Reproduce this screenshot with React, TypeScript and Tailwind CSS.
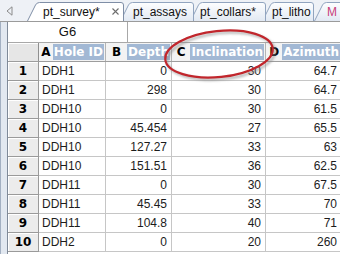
import React from "react";

const rows: string[][] = [
  ["DDH1", "0", "30", "64.7"],
  ["DDH1", "298", "30", "64.7"],
  ["DDH10", "0", "30", "61.5"],
  ["DDH10", "45.454", "27", "65.5"],
  ["DDH10", "127.27", "33", "63"],
  ["DDH10", "151.51", "36", "62.5"],
  ["DDH11", "0", "30", "67.5"],
  ["DDH11", "45.45", "33", "70"],
  ["DDH11", "104.8", "40", "71"],
  ["DDH2", "0", "20", "260"],
];

function TabShape({ w, id, active }: { w: number; id: string; active?: boolean }) {
  const d = `M0.5 19 L8.5 3 Q9.8 0.5 12.5 0.5 L${w - 3} 0.5 Q${w - 0.5} 0.5 ${w - 0.5} 3 L${w - 0.5} 19`;
  return (
    <svg className="absolute left-0 top-0" width={w} height={19} viewBox={`0 0 ${w} 19`}>
      <defs>
        <linearGradient id={id} x1="0" y1="0" x2="0" y2="1">
          <stop offset="0" stopColor={active ? "#ffffff" : "#fdfeff"} />
          <stop offset="1" stopColor={active ? "#ffffff" : "#e2e9f3"} />
        </linearGradient>
      </defs>
      <path d={d} fill={`url(#${id})`} stroke={active ? "#7f8ea6" : "#91a4bf"} strokeWidth="1" />
    </svg>
  );
}

function Tab({
  w,
  label,
  id,
  pl,
  active,
  className,
  textClass,
}: {
  w: number;
  label: string;
  id: string;
  pl: string;
  active?: boolean;
  className?: string;
  textClass?: string;
}) {
  return (
    <div className={`relative h-[19px] shrink-0 ${className ?? ""}`} style={{ width: w }}>
      <TabShape w={w} id={id} active={active} />
      <div className={`relative flex h-full items-center ${pl} text-[12px] leading-none ${textClass ?? "text-[#111]"}`}>
        {label}
        {active && (
          <svg className="ml-[12px]" width="7" height="7" viewBox="0 0 7 7">
            <path d="M0.5 0.5 L6.5 6.5 M6.5 0.5 L0.5 6.5" stroke="#6d6d6d" strokeWidth="1.1" />
          </svg>
        )}
      </div>
    </div>
  );
}

function HeaderCell({ w, letter, label }: { w: number; letter: string; label: string }) {
  return (
    <div
      className="flex h-full shrink-0 items-center border-r border-[#b4b4b4] bg-[#f3f3f3]"
      style={{ width: w }}
    >
      <span className="flex-1 text-center font-['DejaVu_Sans'] text-[12px] font-bold leading-none text-black">
        {letter}
      </span>
      <span className="mr-[1px] flex h-[16px] items-center bg-[#a2b8d4] px-[1px] font-['DejaVu_Sans'] text-[12px] font-bold leading-none text-white">
        {label}
      </span>
    </div>
  );
}

export default function App() {
  const widths = [67, 66, 94, 76];
  return (
    <div className="relative h-[254px] w-[340px] overflow-hidden bg-white font-['Liberation_Sans',Arial,sans-serif]">
      {/* tab strip */}
      <div className="flex h-[22px] items-end border-b border-[#9b9b9b] bg-[#eef1f6]">
        <div className="flex h-full w-[27px] shrink-0 items-center pl-[6px]">
          <svg width="7" height="10" viewBox="0 0 7 10">
            <path d="M6 0.8 L1 5 L6 9.2 Z" fill="none" stroke="#8a8a8a" strokeWidth="1" />
          </svg>
        </div>
        <Tab w={97} label="pt_survey*" id="g1" pl="pl-[16px]" active className="z-30" />
        <Tab w={74} label="pt_assays" id="g2" pl="pl-[13px]" className="z-20 -ml-[4px]" />
        <Tab w={76} label="pt_collars*" id="g3" pl="pl-[10px]" className="z-10 -ml-[4px]" />
        <Tab w={52} label="pt_litho" id="g4" pl="pl-[10px]" className="-ml-[4px]" />
        <Tab w={40} label="M" id="g5" pl="pl-[13px]" textClass="text-[#c8407a]" />
      </div>

      <div className="flex">
        {/* left strip */}
        <div className="h-[232px] w-[7px] shrink-0 border-l border-[#a3b0c2] bg-[#e2e8f0]" />
        <div className="flex flex-col border-l border-[#7f8a99]">
          {/* name box row */}
          <div className="flex h-[21px] border-b border-[#a8a8a8]">
            <div className="flex h-full w-[120px] items-center justify-center border-r border-[#a8a8a8] text-[13px] text-[#111]">
              G6
            </div>
            <div className="flex-1" />
          </div>
          {/* header row */}
          <div className="flex h-[19px] border-b border-[#9d9d9d]">
            <div className="h-full w-[31px] shrink-0 border-r border-[#8f8f8f] bg-[#e6e6e6] shadow-[inset_1px_1px_0_#ffffff]" />
            <HeaderCell w={widths[0]} letter="A" label="Hole ID" />
            <HeaderCell w={widths[1]} letter="B" label="Depth" />
            <HeaderCell w={widths[2]} letter="C" label="Inclination" />
            <HeaderCell w={widths[3]} letter="D" label="Azimuth" />
          </div>
          {/* data rows */}
          {rows.map((r, i) => (
            <div key={i} className="flex h-[19px] text-[12px] leading-none text-[#1c1c1c]">
              <div className="flex h-full w-[31px] shrink-0 items-center justify-center border-b border-r border-[#9a9a9a] bg-[#ececec] font-['DejaVu_Sans'] font-bold text-black shadow-[inset_1px_1px_0_#ffffff]">
                {i + 1}
              </div>
              <div
                className="flex h-full shrink-0 items-center border-b border-r border-[#c6c6c6] pl-[3px]"
                style={{ width: widths[0] }}
              >
                {r[0]}
              </div>
              {[1, 2, 3].map((c) => (
                <div
                  key={c}
                  className="flex h-full shrink-0 items-center justify-end border-b border-r border-[#c6c6c6] pr-[4px]"
                  style={{ width: widths[c] }}
                >
                  {r[c]}
                </div>
              ))}
            </div>
          ))}
        </div>
      </div>

      {/* hand-drawn annotation */}
      <svg className="pointer-events-none absolute left-0 top-0" width="340" height="254" viewBox="0 0 340 254">
        <defs>
          <filter id="blur" x="-20%" y="-20%" width="140%" height="140%">
            <feGaussianBlur stdDeviation="1.2" />
          </filter>
        </defs>
        <ellipse
          cx="221"
          cy="56"
          rx="54"
          ry="23"
          transform="rotate(-6 221 56)"
          fill="none"
          stroke="#8a8a8a"
          strokeOpacity="0.6"
          strokeWidth="2.5"
          filter="url(#blur)"
        />
        <ellipse
          cx="219"
          cy="54"
          rx="54"
          ry="23"
          transform="rotate(-6 219 54)"
          fill="none"
          stroke="#c1262c"
          strokeWidth="2.2"
        />
      </svg>
    </div>
  );
}
